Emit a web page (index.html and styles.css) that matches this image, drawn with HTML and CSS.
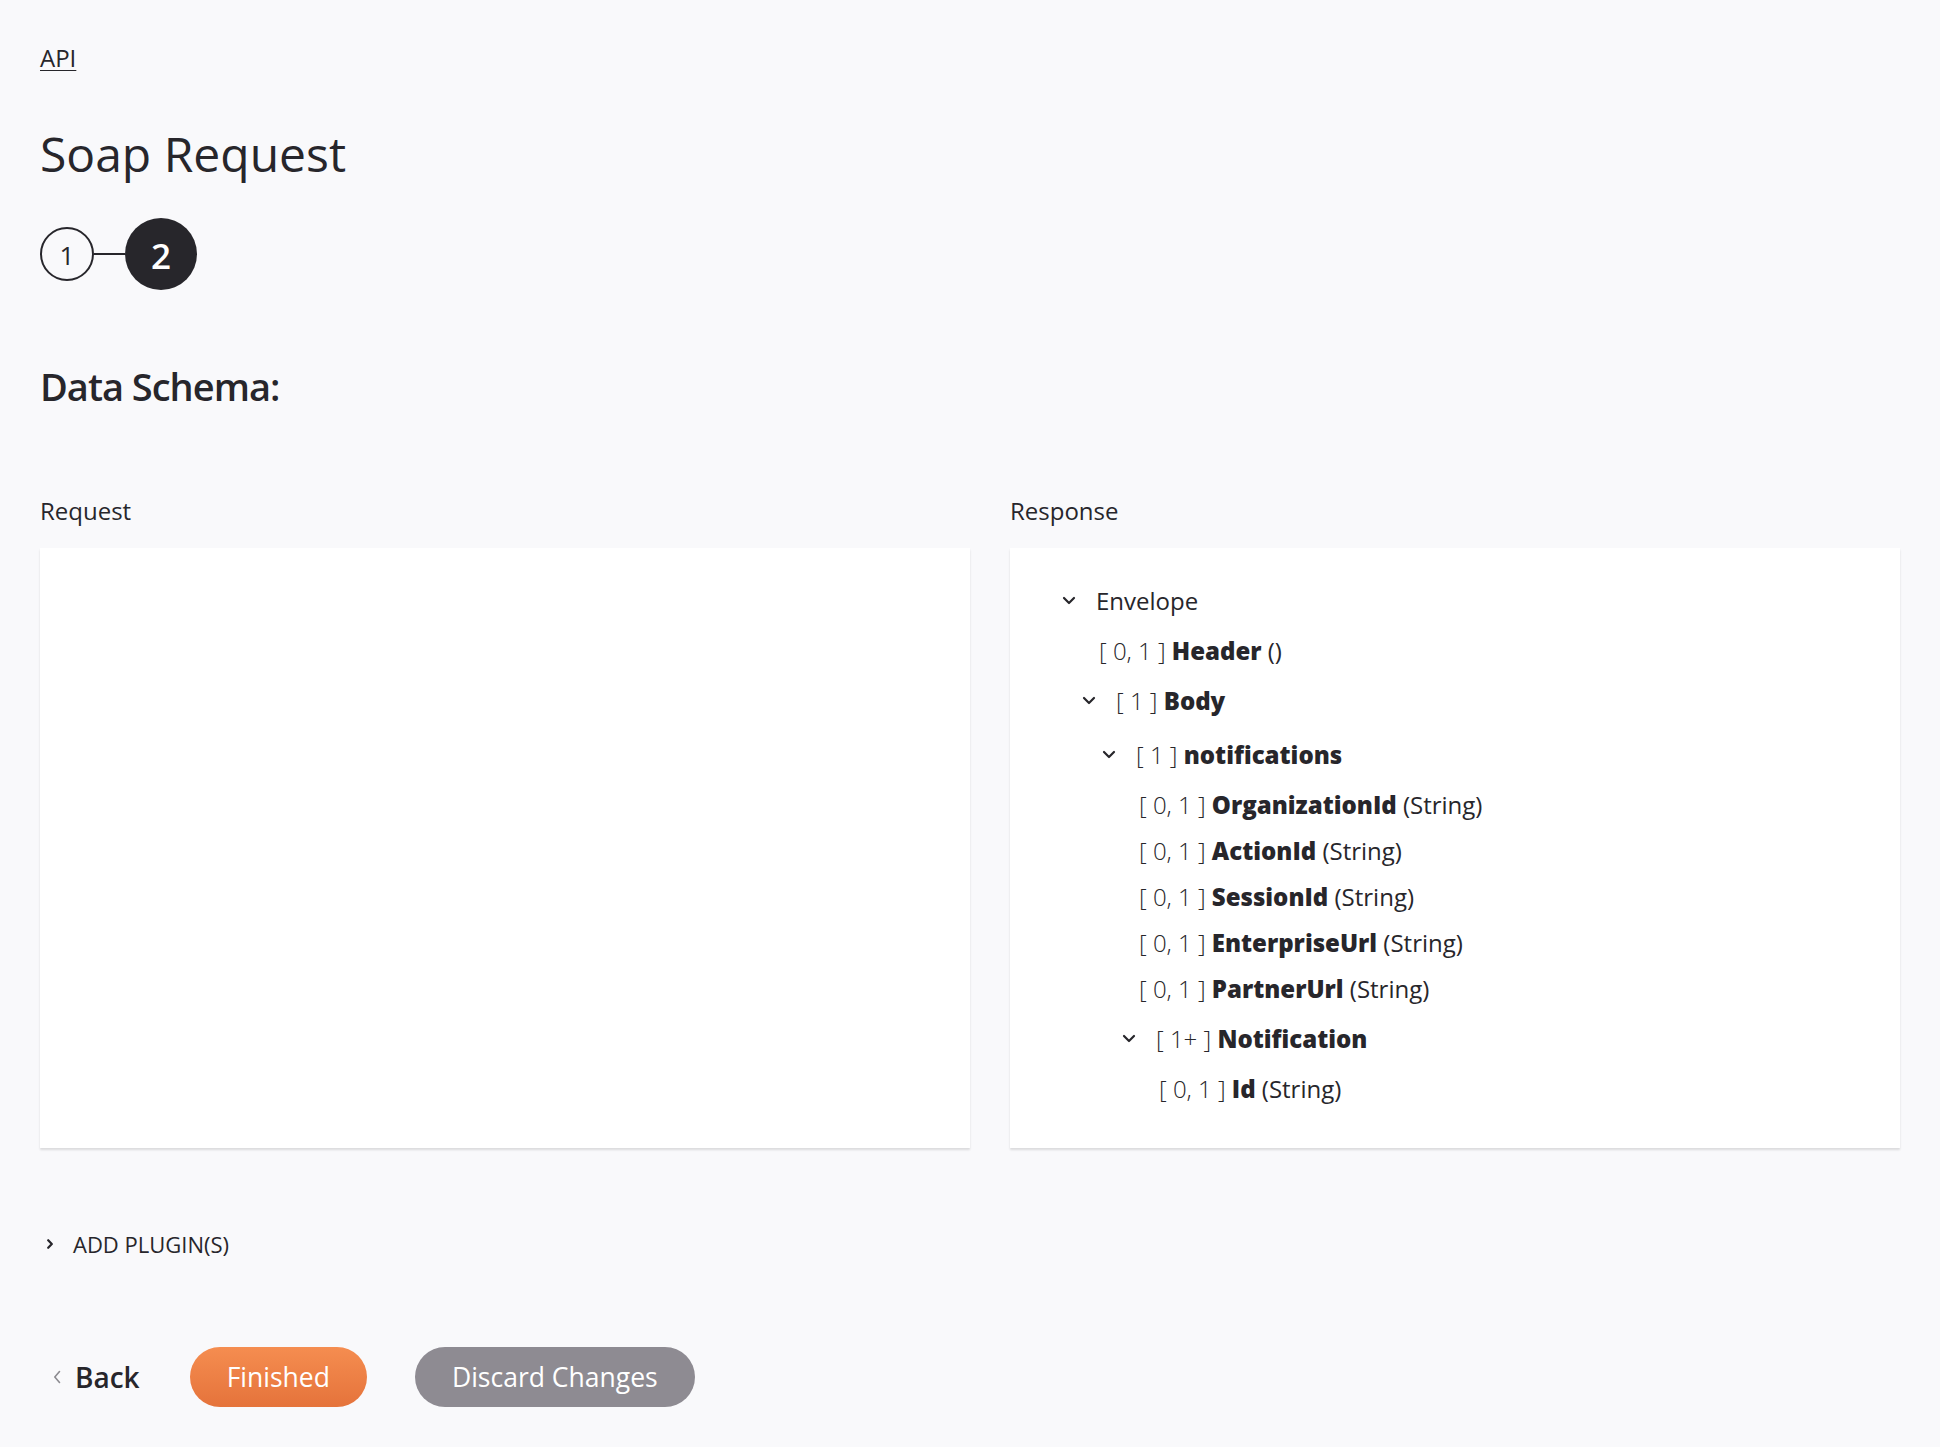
FILE: index.html
```html
<!DOCTYPE html>
<html lang="en">
<head>
<meta charset="utf-8">
<title>Soap Request</title>
<link rel="stylesheet" href="styles.css">
</head>
<body>
<div class="page">
  <a class="crumb" href="#">API</a>
  <h1 class="title">Soap Request</h1>
  <div class="stepper">
    <span class="step step-done">1</span>
    <span class="step-line"></span>
    <span class="step step-active">2</span>
  </div>
  <h2 class="section">Data Schema:</h2>
  <div class="schemas">
    <div class="schema">
      <div class="schema-label">Request</div>
      <div class="panel"></div>
    </div>
    <div class="schema">
      <div class="schema-label">Response</div>
      <div class="panel">
        <div class="tree">
          <div class="node exp"><svg class="chev" viewBox="0 0 14 9"><path d="M2 2 L7 7 L12 2"/></svg><span class="label">Envelope</span></div>
          <div class="children">
            <div class="node leaf"><span class="label"><span class="card">[ 0, 1 ]</span> <b>Header</b> ()</span></div>
            <div class="node exp"><svg class="chev" viewBox="0 0 14 9"><path d="M2 2 L7 7 L12 2"/></svg><span class="label"><span class="card">[ 1 ]</span> <b>Body</b></span></div>
            <div class="children">
              <div class="node exp"><svg class="chev" viewBox="0 0 14 9"><path d="M2 2 L7 7 L12 2"/></svg><span class="label"><span class="card">[ 1 ]</span> <b>notifications</b></span></div>
              <div class="children">
                <div class="node leaf"><span class="label"><span class="card">[ 0, 1 ]</span> <b>OrganizationId</b> (String)</span></div>
                <div class="node leaf"><span class="label"><span class="card">[ 0, 1 ]</span> <b>ActionId</b> (String)</span></div>
                <div class="node leaf"><span class="label"><span class="card">[ 0, 1 ]</span> <b>SessionId</b> (String)</span></div>
                <div class="node leaf"><span class="label"><span class="card">[ 0, 1 ]</span> <b>EnterpriseUrl</b> (String)</span></div>
                <div class="node leaf"><span class="label"><span class="card">[ 0, 1 ]</span> <b>PartnerUrl</b> (String)</span></div>
                <div class="node exp"><svg class="chev" viewBox="0 0 14 9"><path d="M2 2 L7 7 L12 2"/></svg><span class="label"><span class="card">[ 1+ ]</span> <b>Notification</b></span></div>
                <div class="children">
                  <div class="node leaf"><span class="label"><span class="card">[ 0, 1 ]</span> <b>Id</b> (String)</span></div>
                </div>
              </div>
            </div>
          </div>
        </div>
      </div>
    </div>
  </div>
  <div class="plugins">
    <svg class="chev-right" viewBox="0 0 6 10"><path d="M1.2 1.2 L4.8 5 L1.2 8.8"/></svg>
    <span>ADD PLUGIN(S)</span>
  </div>
  <div class="actions">
    <button class="back" type="button"><svg class="chev-left" viewBox="0 0 8 14"><path d="M6.5 1.5 L1.8 7 L6.5 12.5"/></svg><span>Back</span></button>
    <button class="btn btn-primary" type="button">Finished</button>
    <button class="btn btn-secondary" type="button">Discard Changes</button>
  </div>
</div>
</body>
</html>
```

FILE: styles.css
```css
html, body {
  margin: 0;
  padding: 0;
  background: #f9f9fb;
}
body {
  font-family: "Open Sans", "Noto Sans", "Liberation Sans", sans-serif;
  color: #27262b;
}
.page {
  padding: 41px 40px 0 40px;
}
.crumb {
  display: inline-block;
  font-size: 24px;
  line-height: 33px;
  color: #27262b;
  text-decoration: underline;
  text-underline-offset: 3px;
  text-decoration-thickness: 1px;
}
.title {
  margin: 47px 0 0 0;
  font-size: 48px;
  font-weight: 400;
  line-height: 65px;
}
.stepper {
  margin-top: 32px;
  display: flex;
  align-items: center;
  height: 72px;
}
.step {
  display: flex;
  align-items: center;
  justify-content: center;
  border-radius: 50%;
  box-sizing: border-box;
}
.step-done {
  width: 54px;
  height: 54px;
  border: 2px solid #27262b;
  font-size: 26px;
  padding-top: 2px;
}
.step-line {
  width: 31px;
  height: 2px;
  background: #27262b;
}
.step-active {
  width: 72px;
  height: 72px;
  background: #27262b;
  color: #ffffff;
  font-size: 35px;
  font-weight: 600;
  padding-top: 2px;
}
.section {
  margin: 69px 0 0 0;
  font-size: 38px;
  font-weight: 600;
  letter-spacing: -1px;
  line-height: 54px;
}
.schemas {
  margin-top: 81px;
  display: grid;
  grid-template-columns: 930fr 890fr;
  column-gap: 40px;
}
.schema-label {
  font-size: 24px;
  line-height: 33px;
  margin-bottom: 21px;
}
.panel {
  height: 600px;
  background: #ffffff;
  box-shadow: 0 2px 2px rgba(0, 0, 0, 0.12);
}
.tree {
  padding: 25px 0 0 52px;
  font-size: 24px;
}
.children {
  padding-left: 20px;
}
.node {
  display: flex;
  align-items: center;
}
.label {
  white-space: pre;
}
.node.exp {
  height: 54px;
}
.node.leaf {
  height: 46px;
  padding-left: 17px;
}
.chev {
  width: 14px;
  height: 9px;
  margin-right: 20px;
  flex: none;
}
.chev path, .chev-right path, .chev-left path {
  fill: none;
  stroke: #27262b;
  stroke-width: 2.2;
  stroke-linecap: round;
  stroke-linejoin: round;
}
.card {
  font-weight: 300;
  color: #27262b;
}
.node b {
  font-weight: 800;
}
.plugins {
  margin-top: 81px;
  display: flex;
  align-items: center;
  font-size: 22px;
  line-height: 30px;
  padding-left: 7px;
}
.chev-right {
  width: 6px;
  height: 10px;
  margin-right: 20px;
}
.actions {
  margin-top: 88px;
  display: flex;
  align-items: center;
  height: 60px;
}
.back {
  display: flex;
  align-items: center;
  border: none;
  background: none;
  padding: 0 0 0 13px;
  margin: 0 50px 0 0;
  font-family: inherit;
  font-size: 28px;
  font-weight: 600;
  color: #27262b;
}
.chev-left {
  width: 8px;
  height: 14px;
  margin-right: 14px;
}
.chev-left path {
  stroke: #8c8b90;
  stroke-width: 1.6;
}
.btn {
  height: 60px;
  border: none;
  border-radius: 30px;
  padding: 0 37px;
  font-family: inherit;
  font-size: 26.5px;
  font-weight: 400;
  color: #ffffff;
}
.btn-primary {
  background: linear-gradient(180deg, #f58d50 0%, #e5733b 100%);
  margin-right: 48px;
}
.btn-secondary {
  background: #8e8b92;
}
```
